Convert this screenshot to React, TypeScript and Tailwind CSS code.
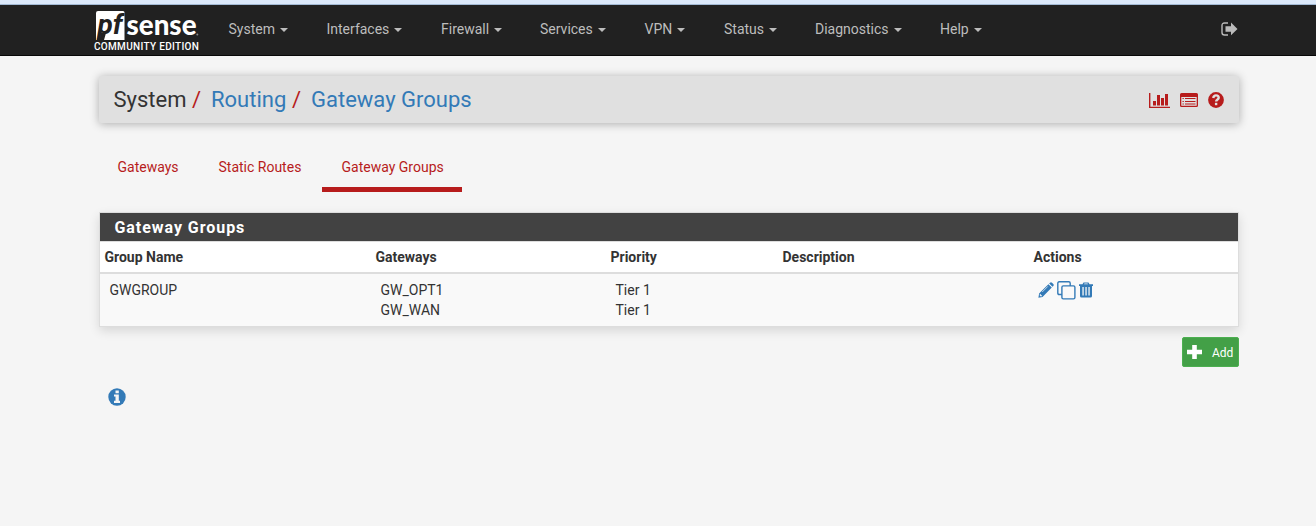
import React from "react";

const menu = [
  { label: "System", width: "w-[98px]" },
  { label: "Interfaces", width: "w-[114.5px]" },
  { label: "Firewall", width: "w-[99px]" },
  { label: "Services", width: "w-[104.5px]" },
  { label: "VPN", width: "w-[79.5px]" },
  { label: "Status", width: "w-[91px]" },
  { label: "Diagnostics", width: "w-[125px]" },
  { label: "Help", width: "w-[60px]" },
];

function Logo() {
  return (
    <div className="flex w-[108px] flex-col pt-[6px]">
      <svg width="108" height="31" viewBox="0 0 108 31" className="block overflow-visible">
        <path d="M4 0h25q1.500 0 1.500 1.500V29H10l2-7H7l-1.500 7H2V2q0-2 2-2z" fill="#fff" />
        <text x="3.500" y="23" fontFamily="Roboto, sans-serif" fontSize="27" fontWeight="700" fontStyle="italic" fill="#212121" textLength="25" lengthAdjust="spacingAndGlyphs">pf</text>
        <text x="32.500" y="23.800" fontFamily="Lato, sans-serif" fontSize="29" fontWeight="900" fill="#fff" textLength="70" lengthAdjust="spacingAndGlyphs">sense</text>
        <circle cx="103.300" cy="23.500" r="1" fill="#888" />
      </svg>
      <span className="whitespace-nowrap text-[10px] font-medium leading-[10px] tracking-[0.32px] text-white">COMMUNITY EDITION</span>
    </div>
  );
}

function SignOut() {
  return (
    <svg width="17" height="14" viewBox="0 0 17 14" className="block">
      <path d="M7 1H3.500Q1 1 1 3.500v7Q1 13 3.500 13H7" fill="none" stroke="#bbb" strokeWidth="1.400" />
      <path d="M4.500 4.300H10V.6L16.500 7 10 13.200V9.700H4.500z" fill="#bbb" />
    </svg>
  );
}

function ChartIcon() {
  return (
    <svg width="21" height="16" viewBox="0 0 21 16" className="block" fill="#b71c1c">
      <path d="M0 1h1.400v13.700H21V16H0zM4 9h3v4.500H4zM8 3h3v10.500H8zM12 6h3v7.500h-3zM16 2h3v11.500h-3z" />
    </svg>
  );
}

function ListIcon() {
  return (
    <svg width="18" height="14" viewBox="0 0 18 14" className="block" fill="#b71c1c">
      <path fillRule="evenodd" d="M1.500 0h15Q18 0 18 1.500v11q0 1.500-1.500 1.500h-15Q0 14 0 12.500v-11Q0 0 1.500 0zM1.300 4v8.300q0 .5.500.5h14.400q.5 0 .5-.5V4z" />
      <path d="M2.500 5h1.300v1H2.500zM5 5h10.500v1H5zM2.500 8h1.300v1H2.500zM5 8h10.500v1H5zM2.500 10.500h1.300v1H2.500zM5 10.500h10.500v1H5z" />
    </svg>
  );
}

function HelpIcon() {
  return (
    <svg width="16" height="16" viewBox="0 0 16 16" className="block">
      <circle cx="8" cy="8" r="7.900" fill="#b71c1c" />
      <path d="M5.200 6C5.500 4.400 6.600 3.400 8 3.400c1.600 0 2.700.9 2.700 2.300 0 1.800-2.600 1.700-2.600 3.900" fill="none" stroke="#e0e0e0" strokeWidth="2.400" />
      <path d="M6.900 10.800h2.400v2.400H6.900z" fill="#e0e0e0" />
    </svg>
  );
}

function PencilIcon() {
  return (
    <svg width="16" height="16" viewBox="0 0 16 16" className="block" fill="#337ab7">
      <path d="M11.200 1.500 12 .7q1-.9 2 0l1.300 1.300q.9 1 0 2l-.8.8zM10.400 2.200l3.400 3.400-9.300 9.400L.4 15.700l.7-4.300z" />
      <path d="M4.200 10 9.800 4.400" fill="none" stroke="#f9f9f9" strokeWidth=".7" />
      <path d="m2 11.800 2.300 2.300-1.500.3-1.100-1.100z" fill="#f9f9f9" />
    </svg>
  );
}

function CloneIcon() {
  return (
    <svg width="19" height="19" viewBox="0 0 19 19" className="block" fill="none" stroke="#337ab7" strokeWidth="1.400">
      <rect x="4.900" y="4.900" width="13" height="13" rx="1.400" />
      <path d="M4.900 13.500H2.200Q.8 13.500.8 12.100V2.200Q.8.800 2.200.800h9.600q1.400 0 1.400 1.400v2.700" />
    </svg>
  );
}

function TrashIcon() {
  return (
    <svg width="14" height="16" viewBox="0 0 14 16" className="block" fill="#337ab7">
      <path fillRule="evenodd" d="M0 2.300h3.500L4.500.5h5l1 1.800H14v1.700h-1V14q0 1.500-1.500 1.500h-9Q1 15.500 1 14V4H0zM5 2.300h4l-.5-.8h-3zM3.400 5v8.500h1.300V5zM6.400 5v8.500h1.300V5zM9.400 5v8.500h1.300V5z" />
    </svg>
  );
}

function InfoIcon() {
  return (
    <svg width="18" height="18" viewBox="0 0 18 18" className="block">
      <circle cx="9" cy="9" r="8.700" fill="#337ab7" />
      <path d="M7.500 2.500h3.300v2.700H7.500zM6 6.500h4.800v6.200H12v2.200H6v-2.200h1.500V8.500H6z" fill="#f5f5f5" />
    </svg>
  );
}

export default function App() {
  return (
    <div className="h-[526px] w-[1316px] overflow-hidden bg-[#f5f5f5] font-[Roboto,sans-serif] text-[14px] leading-5 text-[#333]">
      <div className="h-[5px] border-b border-[#a3bad5] bg-[#dce9fa]" />
      <nav className="flex h-[51px] border-b border-[#080808] bg-[#212121] pl-[94px]">
        <Logo />
        <ul className="flex flex-1 pl-[26.5px] pt-[14px] text-[#bdbdbd]">
          {menu.map((item) => (
            <li key={item.label} className={`flex h-5 items-center gap-[5px] whitespace-nowrap ${item.width}`}>
              {item.label}
              <span className="mt-[2px] border-x-4 border-t-4 border-x-transparent border-t-[#bdbdbd]" />
            </li>
          ))}
        </ul>
        <div className="w-[95px] pt-[17px]"><SignOut /></div>
      </nav>
      <main className="ml-[99px] w-[1140px]">
        <header className="mt-5 flex h-[47px] items-center justify-between rounded-[2px] bg-[#e0e0e0] pl-[14.5px] pr-[15.5px] shadow-[0_1px_10px_rgba(0,0,0,0.3)]">
          <h1 className="flex whitespace-nowrap text-[22px] leading-6">
            <span className="w-[78.5px]">System</span>
            <span className="w-[19px] text-[#b71c1c]">/</span>
            <span className="w-[81px] text-[#337ab7]">Routing</span>
            <span className="w-[19px] text-[#b71c1c]">/</span>
            <span className="text-[#337ab7]">Gateway Groups</span>
          </h1>
          <div className="flex items-center gap-[10px] pt-[1px]">
            <ChartIcon /><ListIcon /><HelpIcon />
          </div>
        </header>
        <div className="mt-[24px] flex h-[45px] text-[#b71c1c]">
          <div className="w-[101px] pl-[18.5px] pt-[10px]">Gateways</div>
          <div className="w-[122px] pl-[18.5px] pt-[10px]">Static Routes</div>
          <div className="w-[140px] border-b-[5px] border-[#b71c1c] pl-[19.5px] pt-[10px]">Gateway Groups</div>
        </div>
        <section className="mt-5 h-[115px] border border-[#ddd] bg-[#f9f9f9] shadow-[0_4px_10px_rgba(0,0,0,0.12)]">
          <h2 className="h-7 bg-[#424242] pl-[14.5px] pt-[1px] text-[16px] font-bold leading-7 tracking-[0.95px] text-white">Gateway Groups</h2>
          <div className="grid h-[33px] grid-cols-[271px_235px_172px_251px_1fr] border-b-2 border-t border-[#ddd] bg-white pl-[4.5px] pt-[5px] font-bold">
            <span>Group Name</span><span>Gateways</span><span>Priority</span><span>Description</span><span>Actions</span>
          </div>
          <div className="grid grid-cols-[271px_235px_172px_251px_1fr] pl-[9.5px] pt-[6px]">
            <span>GWGROUP</span>
            <span>GW_OPT1<br />GW_WAN</span>
            <span>Tier 1<br />Tier 1</span>
            <span />
            <span className="-ml-[0.5px] flex h-5 items-center gap-[3px]"><PencilIcon /><CloneIcon /><TrashIcon /></span>
          </div>
        </section>
        <div className="mt-[10px] flex justify-end">
          <button className="flex h-[30px] w-[57px] items-center rounded-[2px] border border-[#4caf50] bg-[#43a047] pl-[4px] text-[12px] text-white">
            <svg width="15" height="14" viewBox="0 0 15 14"><path d="M5.200 0h4.600v4.800H15v4.400H9.800V14H5.200V9.200H0V4.800h5.200z" fill="#fff" /></svg>
            <span className="ml-[10px] pt-[2px]">Add</span>
          </button>
        </div>
        <div className="ml-[9px] mt-[21px]"><InfoIcon /></div>
      </main>
    </div>
  );
}
